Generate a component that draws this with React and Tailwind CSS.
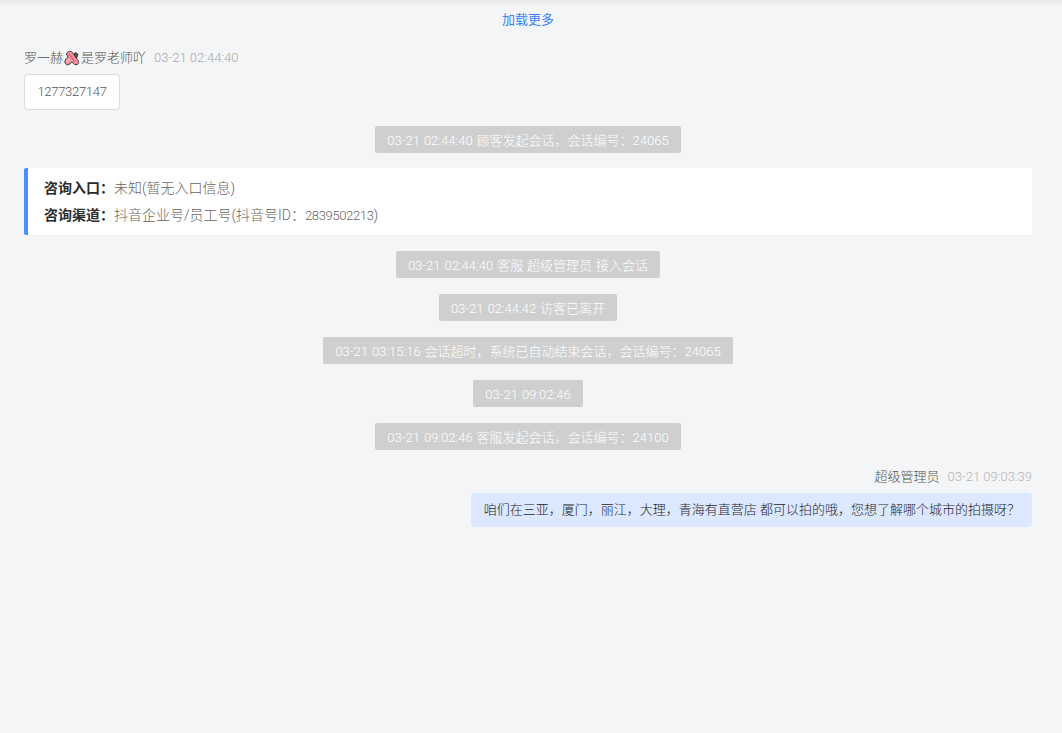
const font = { fontFamily: 'Roboto, "Noto Sans CJK SC", sans-serif' };

const systemMessages = {
  first: "03-21 02:44:40 顾客发起会话，会话编号：24065",
  rest: [
    "03-21 02:44:40 客服 超级管理员 接入会话",
    "03-21 02:44:42 访客已离开",
    "03-21 03:15:16 会话超时，系统已自动结束会话，会话编号：24065",
    "03-21 09:02:46",
    "03-21 09:02:46 客服发起会话，会话编号：24100",
  ],
};

const SystemMessage = ({ text }) => (
  <div className="flex justify-center">
    <div className="h-[27px] rounded-[2px] bg-[#cfcfcf] px-3 text-[13px] font-light leading-[29px] text-white [word-spacing:0.8px] whitespace-nowrap">
      {text}
    </div>
  </div>
);

const Sticker = () => (
  <svg width="16" height="16" viewBox="0 0 16 16" className="mx-[1px] inline-block shrink-0">
    <path d="M9 5 L11.5 2.5 L14 4.5 L12.5 8 Z" fill="#5a5055" stroke="#2f282b" strokeWidth="1" strokeLinejoin="round" />
    <path
      d="M2.5 4 C3.5 1 7 0.5 8.5 2.5 L12 8 C14.5 10 15.5 13 13.5 14.5 C11.5 15.5 9.5 14 8 12 L5 14.5 C3 15.5 0.5 14 1 11 C1.5 9 2.5 8 4 7 Z"
      fill="#f3919f"
      stroke="#40363a"
      strokeWidth="1"
      strokeLinejoin="round"
    />
    <path d="M5 3.5 L10.5 11.5" stroke="#e8607a" strokeWidth="1.4" />
    <path d="M3 12 L5.5 9" stroke="#fbc6ce" strokeWidth="1.4" />
  </svg>
);

const App = () => {
  return (
    <div style={font} className="relative h-[733px] w-full overflow-hidden bg-[#f4f5f7] pl-6 pr-[30px]">
      <div className="absolute left-0 right-0 top-0 h-[6px] bg-gradient-to-b from-[#e8e9eb] to-[#f4f5f7]" />

      <div className="pt-[10px] text-center text-[13px] leading-[20px] text-[#3b82f6]">加载更多</div>

      <div className="mt-[18px] flex h-[20px] items-center text-[13px] font-light text-[#555555]">
        <span>罗一赫</span>
        <Sticker />
        <span>是罗老师吖</span>
        <span className="ml-2 text-[#a8a8a8]">03-21 02:44:40</span>
      </div>

      <div className="mt-[6px] flex">
        <div className="flex h-[36px] w-[96px] items-center justify-center rounded-[4px] border border-[#dcdcdc] bg-white text-[13px] font-light tracking-[-0.3px] text-[#555555]">
          1277327147
        </div>
      </div>

      <div className="mt-[16px]">
        <SystemMessage text={systemMessages.first} />
      </div>

      <div className="mt-[15px] flex h-[67px] flex-col justify-center gap-[6px] rounded-l-[2px] border-l-4 border-[#4c8dff] bg-white pl-4 text-[14px] leading-[21px]">
        <div className="flex">
          <span className="font-semibold text-[#2b2b2b]">咨询入口：</span>
          <span className="font-light text-[#666666]">未知(暂无入口信息)</span>
        </div>
        <div className="flex">
          <span className="font-semibold text-[#2b2b2b]">咨询渠道：</span>
          <span className="font-light text-[#666666]">
            抖音企业号/员工号(抖音号ID：<span className="text-[13px] tracking-[-0.35px]">2839502213</span>)
          </span>
        </div>
      </div>

      <div className="mt-[16px] flex flex-col gap-[16px]">
        {systemMessages.rest.map((text) => (
          <SystemMessage key={text} text={text} />
        ))}
      </div>

      <div className="mt-[17px] flex h-[20px] items-center justify-end text-[13px] font-light text-[#555555]">
        <span>超级管理员</span>
        <span className="ml-2 text-[#b4b4b4]">03-21 09:03:39</span>
      </div>

      <div className="mt-[6px] flex justify-end">
        <div className="flex h-[34px] items-center rounded-[4px] bg-[#dbe8ff] pl-[13px] pr-[12px] text-[13px] font-light text-[#1f1f1f] whitespace-nowrap">
          咱们在三亚，厦门，丽江，大理，青海有直营店 都可以拍的哦，您想了解哪个城市的拍摄呀？
        </div>
      </div>
    </div>
  );
};

export default App;
